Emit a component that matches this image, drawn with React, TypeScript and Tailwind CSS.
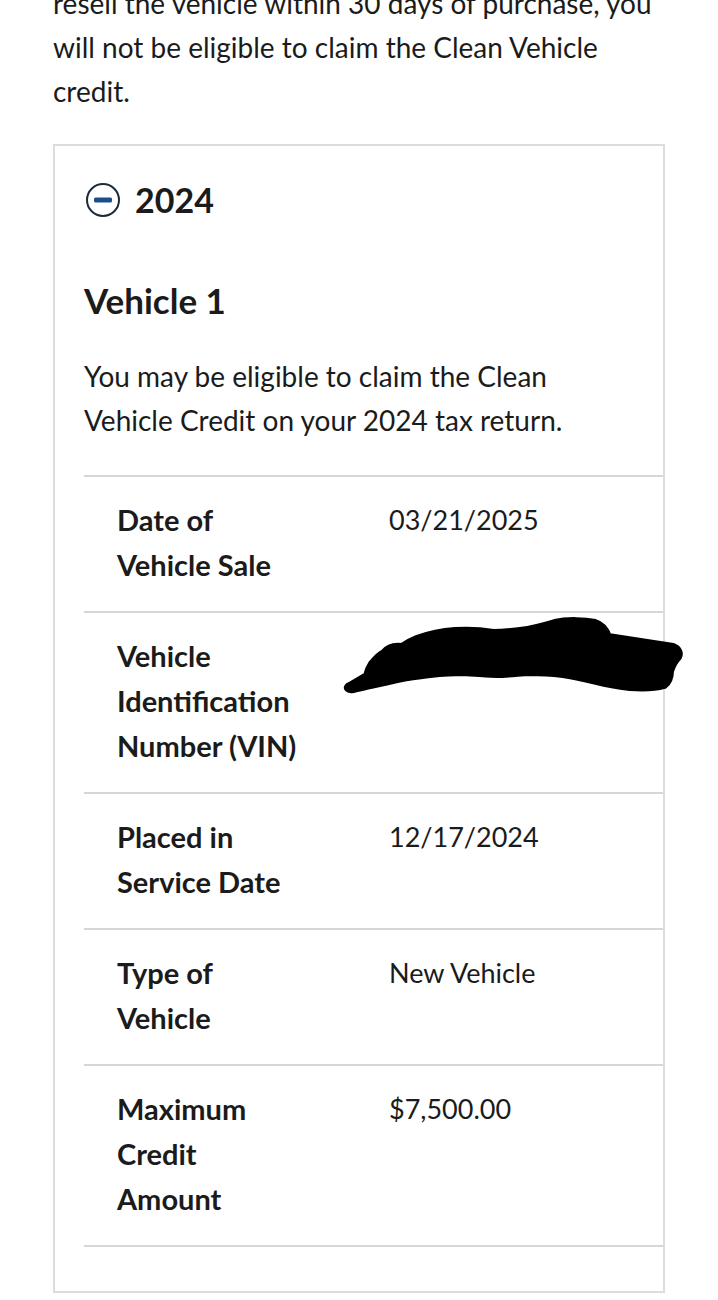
const rows: { label: string; value: string; redacted?: boolean }[] = [
  { label: 'Date of Vehicle Sale', value: '03/21/2025' },
  { label: 'Vehicle Identification Number (VIN)', value: '', redacted: true },
  { label: 'Placed in Service Date', value: '12/17/2024' },
  { label: 'Type of Vehicle', value: 'New Vehicle' },
  { label: 'Maximum Credit Amount', value: '$7,500.00' },
];

const MinusCircle = () => (
  <svg width="36" height="36" viewBox="0 0 36 36" className="shrink-0">
    <circle cx="18" cy="18" r="16" fill="none" stroke="#1c2b3a" strokeWidth="2" />
    <rect x="9" y="15.5" width="18" height="5" rx="1.5" fill="#1a4f8c" />
  </svg>
);

// scribble drawn over the VIN in the screenshot
const Redaction = () => (
  <svg width="350" height="82" viewBox="0 0 350 82" className="block -ml-[49px] -mt-[18px]">
    <path
      d="M10 71 L27 61 C28 55 30 52 32 49 C36 44 40 40 44 38 C48 33 55 31 62 32 C68 28 72 26 77 24 C88 20 100 17 115 16 C130 15 142 16 153 18 C165 18 172 17 180 16 C195 14 205 11 215 8 C228 5 245 6 255 8 C262 10 266 16 268 22 L333 32 C338 34 340 38 338 42 C334 46 332 50 330 56 C330 62 328 67 324 70 C317 72 305 73 290 72 C275 70 265 68 257 66 C240 62 230 60 223 59 C205 57 195 57 190 57 C175 58 165 59 157 59 C150 59 140 58 123 57 C110 57 100 58 90 59 C75 61 65 62 57 64 C40 68 25 71 13 74 C8 75 6 72 10 71 Z"
      fill="#000"
      stroke="#000"
      strokeWidth="8"
      strokeLinejoin="round"
      strokeLinecap="round"
    />
  </svg>
);

export default function App() {
  return (
    <div
      className="min-h-[1300px] bg-white text-[#1b1b1b] overflow-hidden"
      style={{ fontFamily: 'Lato, "Noto Sans", sans-serif' }}
    >
      <div className="pl-[53px] pr-[53px]">
        <p className="-mt-[19px] text-[28px] leading-[44px]">
          resell the vehicle within 30 days of purchase, you will not be eligible to claim the Clean Vehicle
          credit.
        </p>

        <div className="mt-[31px] w-[612px] border-2 border-[#dcdcdc] pl-[29px] pt-[34px] pb-[44px]">
          <div className="flex items-center gap-[14px] pl-[1px]">
            <MinusCircle />
            <h2 className="text-[34px] font-bold leading-[40px]">2024</h2>
          </div>

          <h3 className="mt-[60px] text-[35px] font-bold leading-[40px]">Vehicle 1</h3>

          <p className="mt-[34px] pr-[60px] text-[28px] leading-[44px]">
            You may be eligible to claim the Clean Vehicle Credit on your 2024 tax return.
          </p>

          <div className="mt-[33px] border-t-2 border-[#d6d6d6]">
            {rows.map((row) => (
              <div key={row.label} className="grid grid-cols-[305px_1fr] border-b-2 border-[#d6d6d6] pt-[20px] pb-[24px]">
                <div className="pl-[33px] pr-[88px] text-[29px] font-bold leading-[45px]">{row.label}</div>
                <div className="text-[27px] leading-[45px]">
                  {row.redacted ? <Redaction /> : row.value}
                </div>
              </div>
            ))}
          </div>
        </div>
      </div>
    </div>
  );
}
